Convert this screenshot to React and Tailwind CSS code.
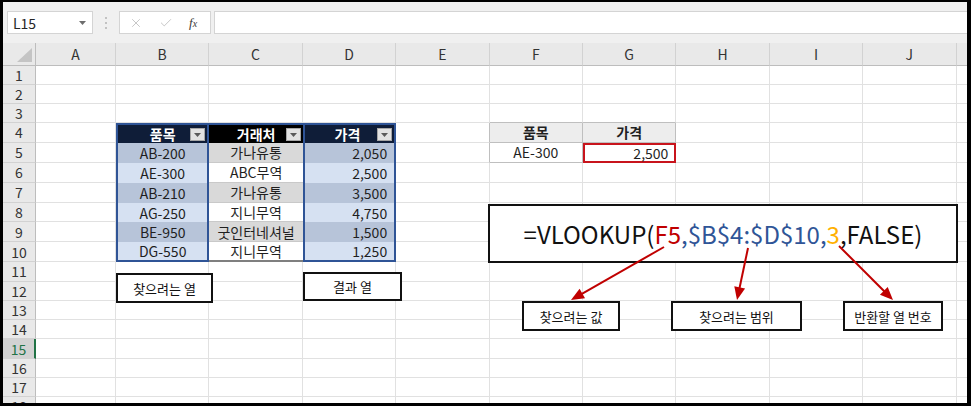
import React from "react";
import { X, Check } from "lucide-react";

const COLS = ["A", "B", "C", "D", "E", "F", "G", "H", "I", "J", ""];
const ROWS = Array.from({ length: 18 }, (_, i) => i + 1);

const tableB = ["AB-200", "AE-300", "AB-210", "AG-250", "BE-950", "DG-550"];
const tableC = ["가나유통", "ABC무역", "가나유통", "지니무역", "굿인터네셔널", "지니무역"];
const tableD = ["2,050", "2,500", "3,500", "4,750", "1,500", "1,250"];

function Filter() {
  return (
    <span className="absolute right-[2px] top-[3px] w-[15px] h-[13px] bg-[#e2e2e2] border border-[#a6a6a6] flex items-center justify-center">
      <svg width="7" height="4" viewBox="0 0 7 4">
        <polygon points="0,0 7,0 3.5,4" fill="#5a5a5a" />
      </svg>
    </span>
  );
}

function Cell({ r, c }) {
  const grid = "border-r border-b border-[#e1e1e1]";
  const body = r - 5;
  // Table B4:D10
  if (r === 4 && (c === 1 || c === 3)) {
    return (
      <div className="relative bg-[#0f1d38] text-white font-bold text-[14px] flex items-center justify-center border-t-2 border-l-2 border-r-2 border-[#2f5496] leading-none">
        <span className={c === 3 ? "mr-[4px]" : ""}>{c === 1 ? "품목" : "가격"}</span>
        <Filter />
      </div>
    );
  }
  if (r === 4 && c === 2) {
    return (
      <div className="relative bg-black text-white font-bold text-[14px] flex items-center justify-center border-t-2 border-[#2f5496] leading-none">
        <span>거래처</span>
        <Filter />
      </div>
    );
  }
  if (r >= 5 && r <= 10 && (c === 1 || c === 3)) {
    const odd = body % 2 === 0;
    const last = r === 10;
    return (
      <div
        className={
          "flex items-center text-[14px] leading-none text-[#1f1f1f] border-l-2 border-r-2 border-[#2f5496] " +
          (odd ? "bg-[#b7c4d9] " : "bg-[#d6e1f2] ") +
          (last ? "border-b-2 " : "border-b-0 ") +
          (c === 1 ? "justify-center" : "justify-end pr-[7px]")
        }
      >
        <span>{c === 1 ? tableB[body] : tableD[body]}</span>
      </div>
    );
  }
  if (r >= 5 && r <= 10 && c === 2) {
    const odd = body % 2 === 0;
    const last = r === 10;
    return (
      <div
        className={
          "flex items-center justify-center text-[14px] leading-none text-[#1f1f1f] " +
          (odd ? "bg-[#d9d9d9] " : "bg-white ") +
          (last ? "border-b-2 border-[#7f7f7f]" : "border-b border-[#c9c9c9]")
        }
      >
        <span>{tableC[body]}</span>
      </div>
    );
  }
  // Table F4:G5
  if (r === 4 && (c === 5 || c === 6)) {
    return (
      <div className="flex items-center justify-center bg-[#ededed] font-bold text-[14px] leading-none text-[#1f1f1f] border-r border-b border-[#bfbfbf]">
        {c === 5 ? "품목" : "가격"}
      </div>
    );
  }
  if (r === 5 && c === 5) {
    return (
      <div className="flex items-center justify-center bg-white text-[14px] leading-none text-[#1f1f1f] border-r border-b border-[#bfbfbf]">
        AE-300
      </div>
    );
  }
  if (r === 5 && c === 6) {
    return (
      <div className="flex items-center justify-end pr-[6px] bg-white text-[14px] leading-none text-[#1f1f1f] border-2 border-[#c8141c]">
        2,500
      </div>
    );
  }
  const leftOfF = r >= 4 && r <= 5 && c === 4 ? " border-r-[#bfbfbf]" : "";
  const aboveF = r === 3 && (c === 5 || c === 6) ? " border-b-[#bfbfbf]" : "";
  return <div className={"bg-white " + grid + leftOfF + aboveF} />;
}

function Arrow({ x1, y1, x2, y2 }) {
  const dx = x2 - x1;
  const dy = y2 - y1;
  const len = Math.sqrt(dx * dx + dy * dy);
  const ux = dx / len;
  const uy = dy / len;
  const hl = 13;
  const hw = 5.5;
  const bx = x2 - ux * hl;
  const by = y2 - uy * hl;
  const nx = -uy;
  const ny = ux;
  const pts = `${x2},${y2} ${bx + nx * hw},${by + ny * hw} ${bx - nx * hw},${by - ny * hw}`;
  return (
    <g>
      <line x1={x1} y1={y1} x2={bx + ux * 2} y2={by + uy * 2} stroke="#c00000" strokeWidth="2" />
      <polygon points={pts} fill="#c00000" />
    </g>
  );
}

export default function App() {
  return (
    <div className="relative w-[971px] h-[406px] overflow-hidden bg-white font-['Noto_Sans_CJK_KR','Noto_Sans',sans-serif]">
      <div className="flex flex-col pl-[3px]">
        {/* Toolbar */}
        <div className="h-[43px] bg-[#f0f0f0] flex items-start pt-[11px]">
          <div className="ml-[4px] w-[86px] h-[23px] bg-white border border-[#d4d4d4] flex items-center justify-between pl-[5px] pr-[6px]">
            <span className="text-[14px] leading-none text-[#262626]">L15</span>
            <svg width="7" height="4" viewBox="0 0 7 4">
              <polygon points="0,0 7,0 3.5,4" fill="#6d6d6d" />
            </svg>
          </div>
          <div className="w-[26px] h-[23px] flex flex-col items-center justify-center gap-[3px]">
            <span className="w-[2px] h-[2px] bg-[#c2c2c2]" />
            <span className="w-[2px] h-[2px] bg-[#c2c2c2]" />
            <span className="w-[2px] h-[2px] bg-[#c2c2c2]" />
          </div>
          <div className="w-[92px] h-[23px] bg-white border border-[#d4d4d4] flex items-center pl-[9px] gap-[16px]">
            <X size={14} strokeWidth={1.3} color="#b5b5b5" />
            <Check size={14} strokeWidth={1.3} color="#b5b5b5" />
            <span className="italic font-['Liberation_Serif',serif] text-[13px] leading-none text-[#3a3a3a]">
              f<span className="text-[10px]">x</span>
            </span>
          </div>
          <div className="ml-[3px] flex-1 h-[23px] bg-white border border-[#d4d4d4]" />
        </div>
        {/* Sheet grid */}
        <div className="grid grid-cols-[33px_80px_repeat(9,93.4px)_1fr] grid-rows-[23px_repeat(3,19px)_repeat(7,19.9px)_repeat(8,19.3px)]">
          <div className="relative bg-[#e9e9e9] border-r border-b border-[#bdbdbd]">
            <svg className="absolute right-[3px] bottom-[3px]" width="15" height="14" viewBox="0 0 15 14">
              <polygon points="15,0 15,14 0,14" fill="#c4c4c4" />
            </svg>
          </div>
          {COLS.map((c, i) => (
            <div
              key={"h" + i}
              className="bg-[#e9e9e9] border-r border-b border-r-[#d2d2d2] border-b-[#bdbdbd] flex items-center justify-center text-[14px] leading-none text-[#333]"
            >
              {c}
            </div>
          ))}
          {ROWS.map((r) => (
            <React.Fragment key={"r" + r}>
              <div
                className={
                  "flex items-center justify-center text-[14px] leading-none border-b border-b-[#d2d2d2] " +
                  (r === 15
                    ? "bg-[#d2d2d2] text-[#217346] border-r-2 border-r-[#217346]"
                    : "bg-[#e9e9e9] text-[#333] border-r border-r-[#bdbdbd]")
                }
              >
                {r}
              </div>
              {COLS.map((_, c) => (
                <Cell key={r + "-" + c} r={r} c={c} />
              ))}
            </React.Fragment>
          ))}
        </div>
      </div>

      {/* Text boxes over the sheet */}
      <div className="absolute left-[488px] top-[204px] w-[470px] h-[59px] bg-white border-2 border-[#111] flex items-center justify-center text-[24px] leading-none text-[#111]">
        <span>
          =VLOOKUP(<span className="text-[#c00000]">F5</span>
          <span className="text-[#2f5597]">,$B$4:$D$10,</span>
          <span className="text-[#ffb000]">3</span>,FALSE)
        </span>
      </div>
      <div className="absolute left-[116px] top-[273px] w-[97px] h-[30px] bg-white border-2 border-[#111] flex items-center justify-center text-[13px] leading-none text-[#111]">
        찾으려는 열
      </div>
      <div className="absolute left-[303px] top-[272px] w-[99px] h-[29px] bg-white border-2 border-[#111] flex items-center justify-center text-[13px] leading-none text-[#111]">
        결과 열
      </div>
      <div className="absolute left-[522px] top-[301px] w-[98px] h-[30px] bg-white border-2 border-[#111] flex items-center justify-center text-[13px] leading-none text-[#111]">
        찾으려는 값
      </div>
      <div className="absolute left-[671px] top-[301px] w-[131px] h-[30px] bg-white border-2 border-[#111] flex items-center justify-center text-[13px] leading-none text-[#111]">
        찾으려는 범위
      </div>
      <div className="absolute left-[843px] top-[301px] w-[100px] h-[30px] bg-white border-2 border-[#111] flex items-center justify-center text-[13px] leading-none text-[#111]">
        반환할 열 번호
      </div>

      <svg className="absolute inset-0 pointer-events-none" width="971" height="406" viewBox="0 0 971 406">
        <Arrow x1={664} y1={247} x2={571} y2={300} />
        <Arrow x1={748} y1={248} x2={737} y2={300} />
        <Arrow x1={839} y1={246} x2={893} y2={300} />
      </svg>

      {/* Screenshot frame */}
      <div className="absolute inset-0 pointer-events-none border-black border-t-2 border-l-[3px] border-r-[4px] border-b-[3px]" />
    </div>
  );
}
